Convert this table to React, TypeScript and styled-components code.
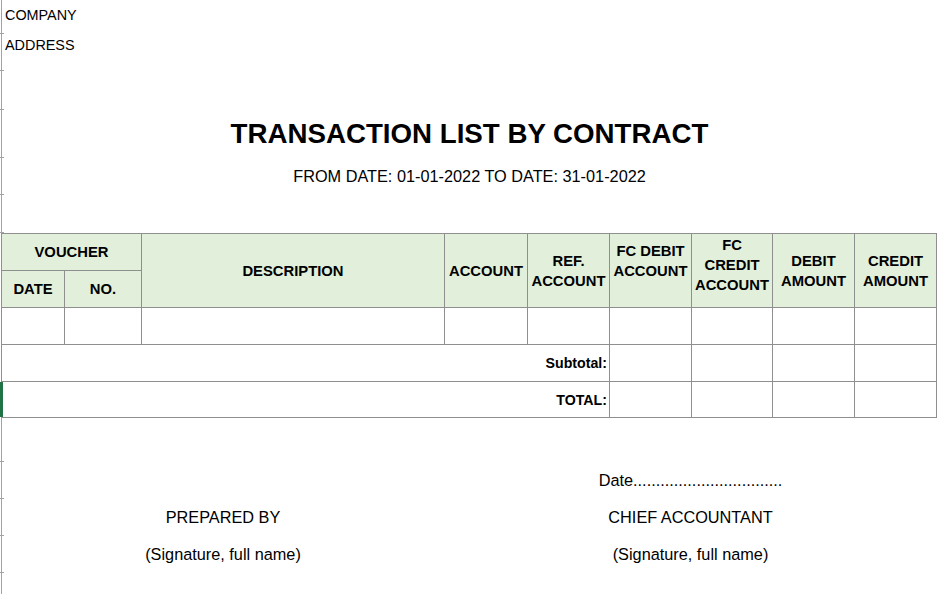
import React from "react";
import styled, { createGlobalStyle } from "styled-components";

const GlobalStyle = createGlobalStyle`
  html, body { margin: 0; padding: 0; background: #ffffff; }
  body { font-family: "Liberation Sans", Arial, sans-serif; color: #000; }
`;

const COLS = [63, 77, 303, 83, 82, 82, 81, 82, 82];
const GRID = "#8f8f8f";
const HEAD_BG = "#e2efda";

const Sheet = styled.div`
  margin-left: 1px;
  border-left: 1px solid #a3a3a3;
  min-height: 594px;
  width: 948px;
  box-sizing: border-box;
`;

const SheetRow = styled.div<{ $h: number; $pb?: number; $align?: string }>`
  position: relative;
  height: ${(p) => p.$h}px;
  box-sizing: border-box;
  padding-bottom: ${(p) => p.$pb ?? 0}px;
  display: flex;
  align-items: center;
  justify-content: ${(p) => p.$align ?? "flex-start"};
  width: 935px;
  &::after {
    content: "";
    position: absolute;
    left: -2px;
    bottom: 0;
    width: 4px;
    height: 1px;
    background: #a3a3a3;
  }
`;

const InfoText = styled.span`
  font-size: 14.4px;
  padding-left: 3px;
`;

const Title = styled.h1`
  margin: 0;
  font-size: 27.7px;
  font-weight: 700;
  letter-spacing: 0;
`;

const Subtitle = styled.div`
  font-size: 16.3px;
`;

const Table = styled.table`
  margin-left: -1px;
  border-collapse: collapse;
  table-layout: fixed;
  width: 936px;
`;

const HeadCell = styled.th<{ $pb?: number; $lh?: number }>`
  background: ${HEAD_BG};
  border: 1px solid ${GRID};
  font-size: 14.8px;
  font-weight: 700;
  line-height: ${(p) => p.$lh ?? 20}px;
  text-align: center;
  vertical-align: middle;
  padding: 0 0 ${(p) => p.$pb ?? 0}px 0;
  white-space: nowrap;
  overflow: hidden;
`;

const Row = styled.tr<{ $h: number }>`
  height: ${(p) => p.$h}px;
`;

const Cell = styled.td`
  border: 1px solid ${GRID};
  padding: 0;
`;

const LabelCell = styled.td<{ $mark?: boolean }>`
  position: relative;
  border: 1px solid ${GRID};
  padding: 0 2px 0 0;
  text-align: right;
  font-size: 14.2px;
  font-weight: 700;
  &::before {
    content: "";
    display: ${(p) => (p.$mark ? "block" : "none")};
    position: absolute;
    left: -2px;
    top: 0;
    bottom: 0;
    width: 3px;
    background: #217346;
  }
`;

const FooterRow = styled.div<{ $h: number }>`
  position: relative;
  height: ${(p) => p.$h}px;
  display: grid;
  grid-template-columns: ${COLS[0] - 1}px ${COLS.slice(1)
      .map((c) => `${c}px`)
      .join(" ")};
  align-items: center;
  width: 935px;
  &::after {
    content: "";
    position: absolute;
    left: -2px;
    bottom: 0;
    width: 4px;
    height: 1px;
    background: #a3a3a3;
  }
`;

const FooterText = styled.div<{ $from: number; $to: number }>`
  grid-column: ${(p) => p.$from} / ${(p) => p.$to};
  justify-self: center;
  text-align: center;
  font-size: 16.3px;
  white-space: nowrap;
`;

const dataCols = Array.from({ length: 9 });
const amountCols = Array.from({ length: 4 });

export default function App() {
  return (
    <>
      <GlobalStyle />
      <Sheet>
        <SheetRow $h={34} $pb={4}>
          <InfoText>COMPANY</InfoText>
        </SheetRow>
        <SheetRow $h={37} $pb={15}>
          <InfoText>ADDRESS</InfoText>
        </SheetRow>
        <SheetRow $h={39} />
        <SheetRow $h={48} $align="center">
          <Title>TRANSACTION LIST BY CONTRACT</Title>
        </SheetRow>
        <SheetRow $h={37} $align="center">
          <Subtitle>FROM DATE: 01-01-2022 TO DATE: 31-01-2022</Subtitle>
        </SheetRow>
        <SheetRow $h={38} />
        <Table>
          <colgroup>
            {COLS.map((w, i) => (
              <col key={i} style={{ width: w }} />
            ))}
          </colgroup>
          <thead>
            <Row $h={37}>
              <HeadCell colSpan={2}>VOUCHER</HeadCell>
              <HeadCell rowSpan={2}>DESCRIPTION</HeadCell>
              <HeadCell rowSpan={2}>ACCOUNT</HeadCell>
              <HeadCell rowSpan={2}>
                REF.
                <br />
                ACCOUNT
              </HeadCell>
              <HeadCell rowSpan={2} $pb={20}>
                FC DEBIT
                <br />
                ACCOUNT
              </HeadCell>
              <HeadCell rowSpan={2} $pb={12}>
                FC
                <br />
                CREDIT
                <br />
                ACCOUNT
              </HeadCell>
              <HeadCell rowSpan={2}>
                DEBIT
                <br />
                AMOUNT
              </HeadCell>
              <HeadCell rowSpan={2}>
                CREDIT
                <br />
                AMOUNT
              </HeadCell>
            </Row>
            <Row $h={37}>
              <HeadCell>DATE</HeadCell>
              <HeadCell>NO.</HeadCell>
            </Row>
          </thead>
          <tbody>
            <Row $h={37}>
              {dataCols.map((_, i) => (
                <Cell key={i} />
              ))}
            </Row>
            <Row $h={37}>
              <LabelCell colSpan={5}>Subtotal:</LabelCell>
              {amountCols.map((_, i) => (
                <Cell key={i} />
              ))}
            </Row>
            <Row $h={36}>
              <LabelCell colSpan={5} $mark>
                TOTAL:
              </LabelCell>
              {amountCols.map((_, i) => (
                <Cell key={i} />
              ))}
            </Row>
          </tbody>
        </Table>
        <FooterRow $h={44} />
        <FooterRow $h={37}>
          <FooterText $from={6} $to={8}>
            Date.................................
          </FooterText>
        </FooterRow>
        <FooterRow $h={37}>
          <FooterText $from={1} $to={4}>
            PREPARED BY
          </FooterText>
          <FooterText $from={6} $to={8}>
            CHIEF ACCOUNTANT
          </FooterText>
        </FooterRow>
        <FooterRow $h={37}>
          <FooterText $from={1} $to={4}>
            (Signature, full name)
          </FooterText>
          <FooterText $from={6} $to={8}>
            (Signature, full name)
          </FooterText>
        </FooterRow>
        <FooterRow $h={23} />
      </Sheet>
    </>
  );
}
